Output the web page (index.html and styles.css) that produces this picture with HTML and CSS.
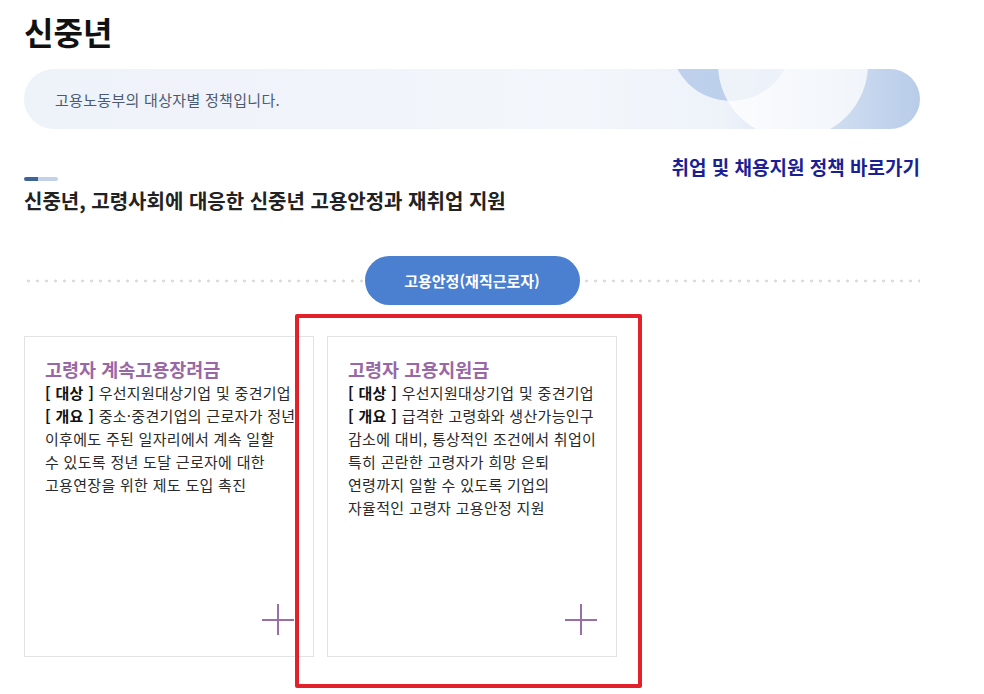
FILE: index.html
```html
<!DOCTYPE html>
<html lang="ko">

<head>
  <meta charset="UTF-8" />
  <meta name="viewport" content="width=device-width, initial-scale=1.0" />
  <title>신중년 - 대상자별 정책</title>
  <link rel="stylesheet" href="styles.css">
</head>

<body>
  <div class="page">
    <h1 class="page-title">신중년</h1>

    <div class="intro-banner">
      <p>고용노동부의 대상자별 정책입니다.</p>
    </div>

    <div class="section-head">
      <div class="section-title">
        <span class="title-bar"></span>
        <h2>신중년, 고령사회에 대응한 신중년 고용안정과 재취업 지원</h2>
      </div>
      <a href="#" class="shortcut-link">취업 및 채용지원 정책 바로가기</a>
    </div>

    <div class="category-row">
      <span class="category-pill">고용안정(재직근로자)</span>
    </div>

    <div class="policy-list">
      <div class="policy-card">
        <h3>고령자 계속고용장려금</h3>
        <p><b>[ 대상 ]</b> 우선지원대상기업 및 중견기업<br>
          <b>[ 개요 ]</b> 중소·중견기업의 근로자가 정년<br>
          이후에도 주된 일자리에서 계속 일할<br>
          수 있도록 정년 도달 근로자에 대한<br>
          고용연장을 위한 제도 도입 촉진</p>
        <a href="#" class="more-btn" aria-label="더보기"></a>
      </div>
      <div class="policy-card">
        <h3>고령자 고용지원금</h3>
        <p><b>[ 대상 ]</b> 우선지원대상기업 및 중견기업<br>
          <b>[ 개요 ]</b> 급격한 고령화와 생산가능인구<br>
          감소에 대비, 통상적인 조건에서 취업이<br>
          특히 곤란한 고령자가 희망 은퇴<br>
          연령까지 일할 수 있도록 기업의<br>
          자율적인 고령자 고용안정 지원</p>
        <a href="#" class="more-btn" aria-label="더보기"></a>
      </div>
    </div>
  </div>

  <!-- 강조 표시 -->
  <div class="highlight-box"></div>
</body>

</html>
```

FILE: styles.css
```css
body {
  font-family: "Noto Sans CJK KR", "Noto Sans", sans-serif;
  background: #fff;
  color: #222;
  margin: 0;
  padding: 0;
}

.page {
  width: 896px;
  padding: 0 24px 40px;
}

.page-title {
  font-size: 32px;
  line-height: 38px;
  font-weight: 700;
  color: #111;
  margin: 12px 0 0;
}

.intro-banner {
  height: 60px;
  margin-top: 19px;
  border-radius: 30px;
  overflow: hidden;
  position: relative;
  display: flex;
  align-items: center;
  background: linear-gradient(to right, #eef2f9 0%, #f3f6fb 62%, #eef3fa 78%, #b8cce9 100%);
}

.intro-banner::before {
  content: "";
  position: absolute;
  left: 646px;
  top: -90px;
  width: 122px;
  height: 122px;
  border-radius: 50%;
  background: rgba(150, 178, 222, 0.55);
}

.intro-banner::after {
  content: "";
  position: absolute;
  left: 694px;
  top: -80px;
  width: 150px;
  height: 150px;
  border-radius: 50%;
  background: rgba(255, 255, 255, 0.75);
}

.intro-banner p {
  position: relative;
  z-index: 1;
  margin: 0 0 0 31px;
  font-size: 15px;
  letter-spacing: 0.3px;
  color: #4b5a72;
}

.section-head {
  display: flex;
  justify-content: space-between;
  margin-top: 26px;
}

.title-bar {
  display: block;
  width: 34px;
  height: 4px;
  margin-top: 22px;
  border-radius: 2px;
  background: linear-gradient(to right, #3e6496 0 14px, #c3d2e8 14px);
}

.section-title h2 {
  font-size: 20px;
  line-height: 24px;
  font-weight: 700;
  color: #222;
  margin: 8px 0 0;
}

.shortcut-link {
  font-size: 19px;
  line-height: 24px;
  font-weight: 700;
  color: #1b1f96;
  text-decoration: none;
}

.category-row {
  margin-top: 43px;
  display: flex;
  justify-content: center;
  background-image: radial-gradient(circle, #dcdcdc 1.4px, transparent 1.6px);
  background-size: 9px 6px;
  background-position: 0 22px;
  background-repeat: repeat-x;
}

.category-pill {
  width: 215px;
  height: 49px;
  border-radius: 25px;
  background: #4a80cf;
  color: #fff;
  font-size: 15px;
  font-weight: 700;
  display: flex;
  align-items: center;
  justify-content: center;
}

.policy-list {
  display: flex;
  gap: 13px;
  margin-top: 31px;
}

.policy-card {
  width: 248px;
  height: 298px;
  padding: 21px 20px 0 20px;
  border: 1px solid #e3e3e3;
  display: flex;
  flex-direction: column;
}

.policy-card h3 {
  font-size: 18.5px;
  line-height: 23px;
  font-weight: 700;
  color: #9a67a6;
  margin: 0;
}

.policy-card p {
  font-size: 15px;
  letter-spacing: 0.3px;
  line-height: 23px;
  color: #2a2a2a;
  margin: 0;
  white-space: nowrap;
}

.policy-card p b {
  color: #111;
}

.more-btn {
  margin-top: auto;
  margin-bottom: 21px;
  margin-right: -1px;
  align-self: flex-end;
  width: 32px;
  height: 31px;
  position: relative;
}

.more-btn::before,
.more-btn::after {
  content: "";
  position: absolute;
  background: #9a6fa5;
}

.more-btn::before {
  left: 0;
  top: 15px;
  width: 32px;
  height: 1.5px;
}

.more-btn::after {
  left: 15px;
  top: 0;
  width: 1.5px;
  height: 31px;
}

.highlight-box {
  position: absolute;
  left: 295px;
  top: 314px;
  width: 339px;
  height: 366px;
  border: 4px solid #e3212b;
  border-radius: 2px;
}
```
